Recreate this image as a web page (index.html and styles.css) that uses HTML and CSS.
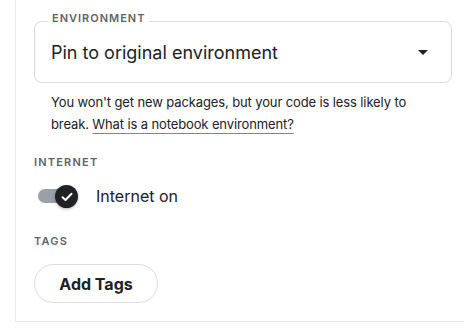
FILE: index.html
```html
<!DOCTYPE html>
<html lang="en">
<head>
  <meta charset="UTF-8" />
  <meta name="viewport" content="width=device-width, initial-scale=1.0"/>
  <title>Notebook settings</title>
  <link rel="stylesheet" href="styles.css">
</head>
<body>
  <div class="panel">
    <div class="select-box">
      <span class="select-label">Environment</span>
      <span class="select-value">Pin to original environment</span>
      <span class="arrow"></span>
    </div>

    <p class="helper">
      You won't get new packages, but your code is less likely to
      break. <a href="#">What is a notebook environment?</a>
    </p>

    <div class="section-label internet">Internet</div>
    <div class="toggle-row">
      <span class="switch">
        <span class="track"></span>
        <span class="knob">
          <svg width="12" height="10" viewBox="0 0 12 10">
            <path d="M1.5 5.2 L4.5 8 L10.5 1.8" fill="none" stroke="#fff" stroke-width="2" stroke-linecap="round" stroke-linejoin="round"/>
          </svg>
        </span>
      </span>
      <span class="toggle-text">Internet on</span>
    </div>

    <div class="section-label tags">Tags</div>
    <button class="tag-btn">Add Tags</button>
  </div>
</body>
</html>
```

FILE: styles.css
```css
* { box-sizing: border-box; margin: 0; padding: 0; }

body {
  background: #fff;
  font-family: 'Inter', 'Roboto', sans-serif;
  color: #202124;
}

.panel {
  margin-left: 15px;
  width: 449px;
  border-left: 1px solid #e8eaed;
  border-bottom: 1px solid #e8eaed;
  padding: 21px 0 18px 18px;
}

.select-box {
  position: relative;
  display: flex;
  align-items: center;
  width: 418px;
  height: 62px;
  border: 1px solid #dadce0;
  border-radius: 8px;
  padding: 0 23px 0 16px;
}

.select-label {
  position: absolute;
  top: -11px;
  left: 13px;
  padding: 0 4px;
  background: #fff;
  font-size: 11px;
  line-height: 14px;
  font-weight: 600;
  letter-spacing: 1px;
  text-transform: uppercase;
  color: #5f6368;
}

.select-value {
  flex: 1;
  font-size: 18px;
}

.arrow {
  width: 0;
  height: 0;
  border-left: 5px solid transparent;
  border-right: 5px solid transparent;
  border-top: 5px solid #202124;
}

.helper {
  margin-top: 8px;
  padding: 0 40px 0 17px;
  font-size: 13px;
  line-height: 22px;
  letter-spacing: -0.12px;
}

.helper a {
  color: #202124;
  text-decoration: underline;
  text-decoration-color: #80868b;
  text-underline-offset: 4px;
}

.section-label {
  font-size: 11px;
  line-height: 14px;
  font-weight: 600;
  letter-spacing: 1.2px;
  text-transform: uppercase;
  color: #5f6368;
}

.internet { margin-top: 20px; }
.tags { margin-top: 26px; }

.toggle-row {
  display: flex;
  align-items: center;
  gap: 18px;
  height: 24px;
  margin-top: 15px;
  padding-left: 4px;
}

.switch {
  position: relative;
  width: 40px;
  height: 24px;
}

.track {
  position: absolute;
  left: 0;
  top: 5px;
  width: 28px;
  height: 14px;
  border-radius: 7px;
  background: #9aa0a6;
}

.knob {
  position: absolute;
  left: 17px;
  top: 1px;
  width: 23px;
  height: 23px;
  border-radius: 50%;
  background: #202124;
  box-shadow: 0 1px 3px rgba(0,0,0,0.3);
  display: flex;
  align-items: center;
  justify-content: center;
}

.toggle-text {
  font-size: 16px;
}

.tag-btn {
  display: block;
  margin-top: 16px;
  width: 124px;
  height: 39px;
  border: 1px solid #dadce0;
  border-radius: 20px;
  background: #fff;
  font-family: inherit;
  font-size: 16px;
  font-weight: 700;
  color: #202124;
}
```
